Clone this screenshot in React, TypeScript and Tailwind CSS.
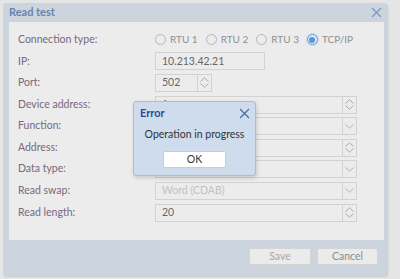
import React from 'react';

const font = { fontFamily: 'Lato, "Open Sans", "Liberation Sans", sans-serif' };

const Spin = () => (
  <div className="w-[14px] h-full border-l border-[#d2d2d2] flex flex-col items-center justify-center gap-[1px]">
    <svg width="9" height="5" viewBox="0 0 9 5"><path d="M0.5 4.5 L4.5 0.8 L8.5 4.5" fill="none" stroke="#a9a9a9" strokeWidth="1" /></svg>
    <svg width="9" height="5" viewBox="0 0 9 5"><path d="M0.5 0.5 L4.5 4.2 L8.5 0.5" fill="none" stroke="#a9a9a9" strokeWidth="1" /></svg>
  </div>
);

const Drop = () => (
  <div className="w-[14px] h-full border-l border-[#d2d2d2] flex items-center justify-center">
    <svg width="9" height="5" viewBox="0 0 9 5"><path d="M0.5 0.5 L4.5 4.2 L8.5 0.5" fill="none" stroke="#b0b0b0" strokeWidth="1" /></svg>
  </div>
);

const Field: React.FC<{ value?: string; kind?: 'spin' | 'drop'; dim?: boolean; w?: string }> = ({ value, kind, dim, w }) => (
  <div className={`h-[18px] flex items-stretch border border-[#d2d2d2] bg-[#ececec] ${w ?? 'w-[202px]'}`}>
    <div className={`flex-1 flex items-center pl-[6px] text-[10.5px] ${dim ? 'text-[#c2c2c2]' : 'text-[#666]'}`}>{value}</div>
    {kind === 'spin' && <Spin />}
    {kind === 'drop' && <Drop />}
  </div>
);

const Radio: React.FC<{ label: string; on?: boolean }> = ({ label, on }) => (
  <div className="flex items-center gap-[4px] mr-[8px]">
    {on ? (
      <div className="w-[11px] h-[11px] rounded-full border border-[#6f9fd8] bg-[#dfeaf7] flex items-center justify-center shadow-[0_0_0_1px_#c9dbef]">
        <div className="w-[6px] h-[6px] rounded-full bg-[#5b93d6]" />
      </div>
    ) : (
      <div className="w-[11px] h-[11px] rounded-full border border-[#b5b5b5] bg-[#ececec]" />
    )}
    <span className="text-[10px] text-[#8f8f8f]">{label}</span>
  </div>
);

const rows: { label: string; node: React.ReactNode }[] = [
  {
    label: 'Connection type:',
    node: (
      <div className="flex items-center">
        <Radio label="RTU 1" />
        <Radio label="RTU 2" />
        <Radio label="RTU 3" />
        <Radio label="TCP/IP" on />
      </div>
    ),
  },
  { label: 'IP:', node: <Field value="10.213.42.21" w="w-[110px]" /> },
  { label: 'Port:', node: <Field value="502" kind="spin" w="w-[57px]" /> },
  { label: 'Device address:', node: <Field value="1" kind="spin" /> },
  { label: 'Function:', node: <Field kind="drop" /> },
  { label: 'Address:', node: <Field kind="spin" /> },
  { label: 'Data type:', node: <Field kind="drop" dim /> },
  { label: 'Read swap:', node: <Field value="Word (CDAB)" kind="drop" dim /> },
  { label: 'Read length:', node: <Field value="20" kind="spin" /> },
];

export default function App() {
  return (
    <div className="w-[400px] h-[279px] bg-[#e5e5e5] pt-[3px] pl-[3px] relative overflow-hidden" style={font}>
      <div className="w-[384px] h-[273px] bg-[#ccd4de] rounded-[3px] flex flex-col shadow-[1px_1px_2px_rgba(0,0,0,0.12)]">
        <div className="h-[19px] flex items-center justify-between pl-[6px] pr-[5px]">
          <span className="text-[11px] font-bold text-[#6784ad]">Read test</span>
          <svg width="11" height="11" viewBox="0 0 11 11"><path d="M1 1 L10 10 M10 1 L1 10" stroke="#7d97ba" strokeWidth="1.3" /></svg>
        </div>
        <div className="ml-[6px] mr-[3px] h-[218px] bg-[#ececec] pt-[7px] pl-[9px]">
          {rows.map((r) => (
            <div key={r.label} className="h-[21.6px] flex items-center">
              <div className="w-[137px] text-[10.5px] text-[#76697d]">{r.label}</div>
              {r.node}
            </div>
          ))}
        </div>
        <div className="flex-1 flex items-start justify-end gap-[6px] pt-[8px] pr-[9px]">
          <button className="w-[62px] h-[17px] rounded-[2px] border border-[#d4d4d4] bg-[#ebebeb] text-[10.5px] text-[#a8a8a8]">Save</button>
          <button className="w-[61px] h-[17px] rounded-[2px] border border-[#d4d4d4] bg-[#ebebeb] text-[10.5px] text-[#8c8c8c]">Cancel</button>
        </div>
      </div>

      <div className="absolute left-[133px] top-[101px] w-[123px] h-[75px] rounded-[3px] border border-[#a9bdd8] bg-[#cfdcee] shadow-[1px_2px_4px_rgba(0,0,0,0.15)] flex flex-col">
        <div className="h-[22px] flex items-center justify-between pl-[6px] pr-[5px]">
          <span className="text-[11px] font-bold text-[#2c4f8f]">Error</span>
          <svg width="11" height="11" viewBox="0 0 11 11"><path d="M1 1 L10 10 M10 1 L1 10" stroke="#4a6ea8" strokeWidth="1.3" /></svg>
        </div>
        <div className="text-center text-[10.5px] text-[#333] mt-[3px]">Operation in progress</div>
        <div className="flex justify-center mt-[8px]">
          <button className="w-[63px] h-[17px] rounded-[2px] border border-[#c9cdd3] bg-white text-[10.5px] text-[#333]">OK</button>
        </div>
      </div>
    </div>
  );
}
